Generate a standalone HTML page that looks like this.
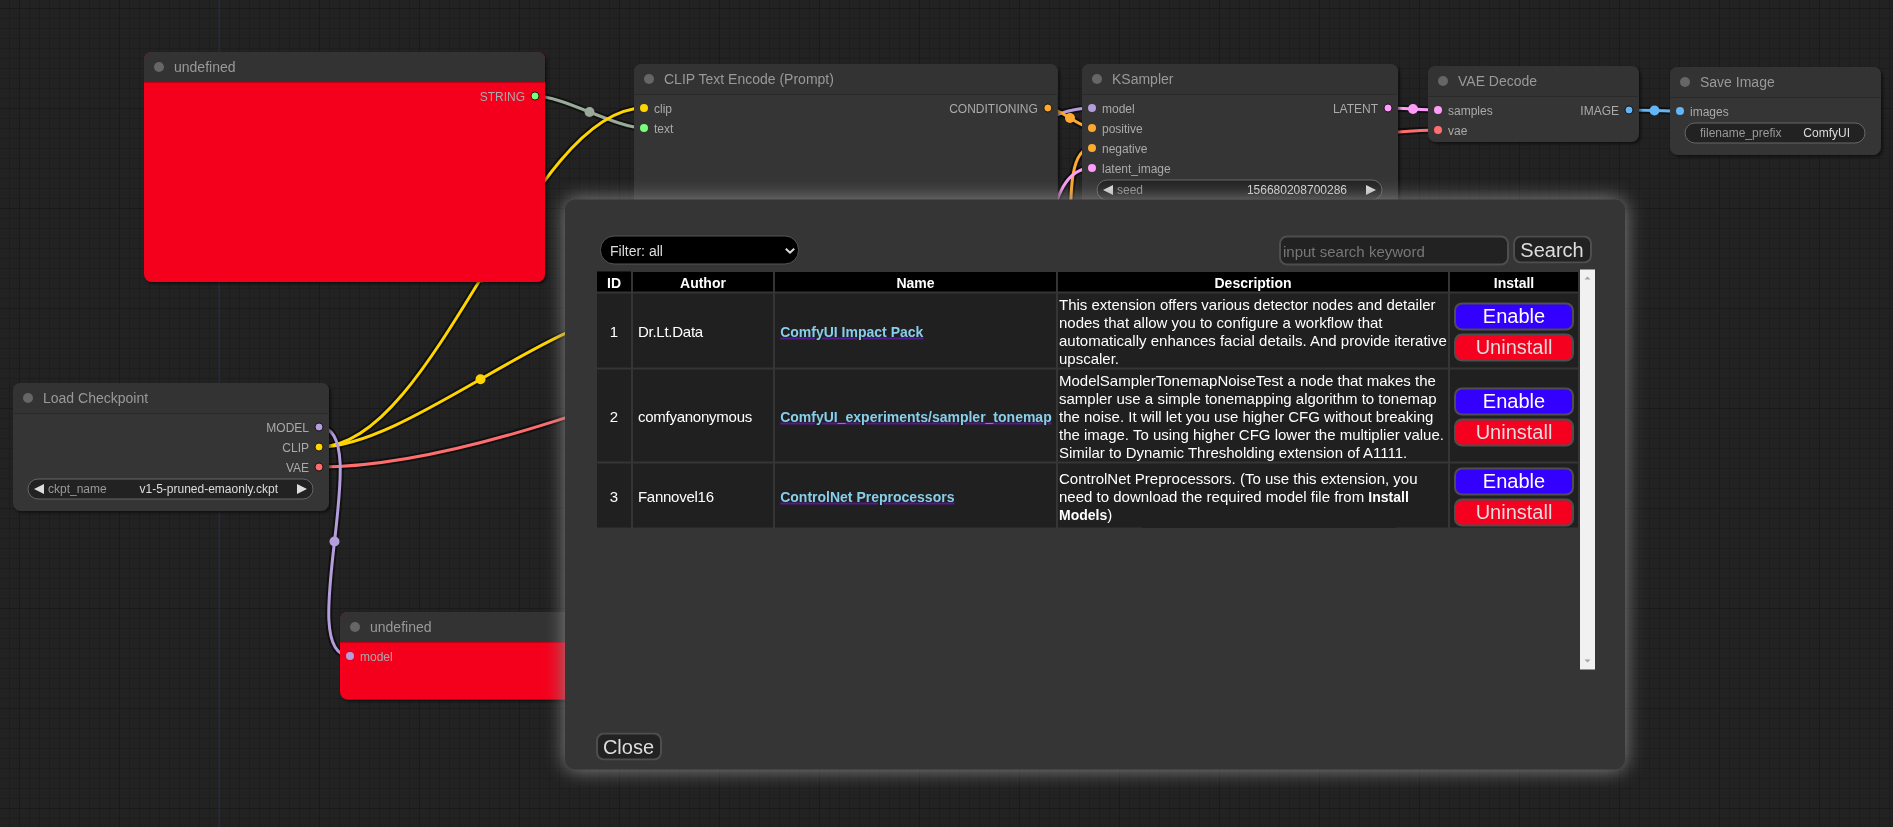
<!DOCTYPE html>
<html><head><meta charset="utf-8"><style>
*{box-sizing:border-box}
html,body{margin:0;padding:0;width:1893px;height:827px;overflow:hidden;font-family:"Liberation Sans", sans-serif}
body{background-color:#222;background-image:linear-gradient(to right,#1a1a1a 1px,transparent 1px),linear-gradient(to bottom,#1a1a1a 1px,transparent 1px),linear-gradient(to right,#1d1d1d 1px,transparent 1px),linear-gradient(to bottom,#1d1d1d 1px,transparent 1px);
background-size:100px 100%,100% 100px,10px 100%,100% 10px;background-position:19px 0,0 8px,9px 0,0 8px}
#cv{position:absolute;left:0;top:0;will-change:transform}
#cv text{font-family:"Liberation Sans", sans-serif}
.dlg{position:absolute;left:565px;top:199px;width:1060px;height:570px;background:#353535;border-radius:10px;box-shadow:0 0 20px #888;}
.sel{position:absolute;left:600px;top:235px;width:199px;height:29px;background:#000;border:1px solid #555;border-radius:14px;color:#ddd;font-size:14px;padding-left:9px;line-height:29px}
.sel svg{position:absolute;right:2px;top:9.5px}
.inp{position:absolute;left:1279px;top:235px;width:229.5px;height:30px;background:#222;border:2px solid #4e4e4e;border-radius:8px;color:#777;font-size:15px;line-height:27px;padding-left:2px}
.btn{position:absolute;background:#222;border:2px solid #4e4e4e;border-radius:8px;color:#ddd;font-size:20px;text-align:center;line-height:24px}
.tbl{position:absolute;left:595px;top:269px;width:985px;height:400px}
.cell{position:absolute;background:#202020;color:#fff;font-size:15px}
.hd{position:absolute;background:#000;color:#fff;font-weight:bold;font-size:14px;text-align:center;line-height:19px;padding-top:2px}
.desc{line-height:18px;padding:2px 0 0 1px}
.desc b{font-size:14px}
.mid{display:flex;align-items:center;padding-top:1px}
.mid2{padding-top:2px}
a.lk{color:#551A8B;text-decoration:underline;text-decoration-thickness:1.5px;font-weight:bold;font-size:14px}
a.lk span{color:#87CEEB}
.sb{position:absolute;left:1580px;top:269px;width:15px;height:400px;background:#f1f1f1}
.ib{position:absolute;width:120px;height:28px;border:2px solid #4e4e4e;border-radius:8px;font-size:20px;text-align:center;line-height:23px}
</style></head><body>
<svg id="cv" width="1893" height="827" viewBox="0 0 1893 827">
<defs>
<pattern id="gmin" x="9.5" y="8.2" width="10" height="10" patternUnits="userSpaceOnUse">
<rect x="0" y="0" width="10" height="1.5" fill="#1c1c1c"/><rect x="-0.6" y="0" width="1.5" height="10" fill="#1c1c1c"/>
</pattern>
<pattern id="gmaj" x="19" y="8" width="100" height="100" patternUnits="userSpaceOnUse">
<rect x="0" y="-0.3" width="100" height="2" fill="#1a1a1a"/><rect x="-0.5" y="0" width="2" height="100" fill="#1a1a1a"/>
</pattern>
<filter id="tsh" x="-5%" y="-20%" width="110%" height="160%"><feDropShadow dx="2" dy="2" stdDeviation="1.5" flood-color="#000" flood-opacity="0.5"/></filter>
<filter id="nsh" x="-5%" y="-5%" width="110%" height="120%"><feDropShadow dx="2" dy="2" stdDeviation="1.5" flood-color="#000" flood-opacity="0.5"/></filter>
</defs>
<rect x="218.5" y="0" width="1.5" height="827" fill="#232b40"/>

<path d="M535.00,96.00 C563.40,96.00 615.60,128.00 644.00,128.00" fill="none" stroke="rgba(0,0,0,0.5)" stroke-width="7" stroke-linecap="round"/>
<path d="M319.00,447.00 C436.41,447.00 526.59,108.00 644.00,108.00" fill="none" stroke="rgba(0,0,0,0.5)" stroke-width="7" stroke-linecap="round"/>
<path d="M319.00,447.00 C406.57,447.00 554.43,311.50 642.00,311.50" fill="none" stroke="rgba(0,0,0,0.5)" stroke-width="7" stroke-linecap="round"/>
<path d="M319.00,467.00 C611.16,467.00 1145.84,130.00 1438.00,130.00" fill="none" stroke="rgba(0,0,0,0.5)" stroke-width="7" stroke-linecap="round"/>
<path d="M610.00,656.00 C792.45,656.00 909.55,108.00 1092.00,108.00" fill="none" stroke="rgba(0,0,0,0.5)" stroke-width="7" stroke-linecap="round"/>
<path d="M319.00,427.00 C376.77,427.00 292.23,656.00 350.00,656.00" fill="none" stroke="rgba(0,0,0,0.5)" stroke-width="7" stroke-linecap="round"/>
<path d="M1048.00,108.00 C1060.08,108.00 1079.92,128.00 1092.00,128.00" fill="none" stroke="rgba(0,0,0,0.5)" stroke-width="7" stroke-linecap="round"/>
<path d="M1048.30,311.50 C1090.61,311.50 1049.69,148.00 1092.00,148.00" fill="none" stroke="rgba(0,0,0,0.5)" stroke-width="7" stroke-linecap="round"/>
<path d="M998.00,531.50 C1091.86,531.50 998.14,168.00 1092.00,168.00" fill="none" stroke="rgba(0,0,0,0.5)" stroke-width="7" stroke-linecap="round"/>
<path d="M1388.00,108.00 C1400.51,108.00 1425.49,110.00 1438.00,110.00" fill="none" stroke="rgba(0,0,0,0.5)" stroke-width="7" stroke-linecap="round"/>
<path d="M1629.00,110.00 C1641.75,110.00 1667.25,111.00 1680.00,111.00" fill="none" stroke="rgba(0,0,0,0.5)" stroke-width="7" stroke-linecap="round"/>
<path d="M535.00,96.00 C563.40,96.00 615.60,128.00 644.00,128.00" fill="none" stroke="#9A9" stroke-width="3"/>
<circle cx="589.50" cy="112.00" r="5" fill="#9A9"/>
<path d="M319.00,447.00 C436.41,447.00 526.59,108.00 644.00,108.00" fill="none" stroke="#FFD500" stroke-width="3"/>
<circle cx="481.50" cy="277.50" r="5" fill="#FFD500"/>
<path d="M319.00,447.00 C406.57,447.00 554.43,311.50 642.00,311.50" fill="none" stroke="#FFD500" stroke-width="3"/>
<circle cx="480.50" cy="379.25" r="5" fill="#FFD500"/>
<path d="M319.00,467.00 C611.16,467.00 1145.84,130.00 1438.00,130.00" fill="none" stroke="#FF6E6E" stroke-width="3"/>
<circle cx="878.50" cy="298.50" r="5" fill="#FF6E6E"/>
<path d="M610.00,656.00 C792.45,656.00 909.55,108.00 1092.00,108.00" fill="none" stroke="#B39DDB" stroke-width="3"/>
<circle cx="851.00" cy="382.00" r="5" fill="#B39DDB"/>
<path d="M319.00,427.00 C376.77,427.00 292.23,656.00 350.00,656.00" fill="none" stroke="#B39DDB" stroke-width="3"/>
<circle cx="334.50" cy="541.50" r="5" fill="#B39DDB"/>
<path d="M1048.00,108.00 C1060.08,108.00 1079.92,128.00 1092.00,128.00" fill="none" stroke="#FFA931" stroke-width="3"/>
<circle cx="1070.00" cy="118.00" r="5" fill="#FFA931"/>
<path d="M1048.30,311.50 C1090.61,311.50 1049.69,148.00 1092.00,148.00" fill="none" stroke="#FFA931" stroke-width="3"/>
<circle cx="1070.15" cy="229.75" r="5" fill="#FFA931"/>
<path d="M998.00,531.50 C1091.86,531.50 998.14,168.00 1092.00,168.00" fill="none" stroke="#FF9CF9" stroke-width="3"/>
<circle cx="1045.00" cy="349.75" r="5" fill="#FF9CF9"/>
<path d="M1388.00,108.00 C1400.51,108.00 1425.49,110.00 1438.00,110.00" fill="none" stroke="#FF9CF9" stroke-width="3"/>
<circle cx="1413.00" cy="109.00" r="5" fill="#FF9CF9"/>
<path d="M1629.00,110.00 C1641.75,110.00 1667.25,111.00 1680.00,111.00" fill="none" stroke="#64B5F6" stroke-width="3"/>
<circle cx="1654.50" cy="110.50" r="5" fill="#64B5F6"/>
<rect x="144" y="52" width="401" height="230" rx="8" fill="#F5001E" filter="url(#nsh)"/>
<path d="M144,82 L144,60 Q144,52 152,52 L537,52 Q545,52 545,60 L545,82 Z" fill="#333"/>
<rect x="144" y="82" width="400" height="1" fill="#000" fill-opacity="0.2"/>
<circle cx="159" cy="67" r="5" fill="#666"/>
<text x="174" y="72" font-size="14" fill="#999" text-anchor="start" font-weight="normal">undefined</text>
<circle cx="535" cy="96.0" r="4" fill="#7F7" stroke="#000" stroke-opacity="0.8" stroke-width="1"/>
<text x="525" y="101.0" font-size="12" fill="#AAA" text-anchor="end" font-weight="normal">STRING</text>
<rect x="634" y="64" width="423.84" height="194.31" rx="8" fill="#353535" filter="url(#nsh)"/>
<path d="M634,94 L634,72 Q634,64 642,64 L1049.84,64 Q1057.84,64 1057.84,72 L1057.84,94 Z" fill="#333"/>
<rect x="634" y="94" width="422.84" height="1" fill="#000" fill-opacity="0.2"/>
<circle cx="649" cy="79" r="5" fill="#666"/>
<text x="664" y="84" font-size="14" fill="#999" text-anchor="start" font-weight="normal">CLIP Text Encode (Prompt)</text>
<circle cx="644" cy="108.0" r="4" fill="#FFD500"/>
<text x="654" y="113.0" font-size="12" fill="#AAA" text-anchor="start" font-weight="normal">clip</text>
<circle cx="644" cy="128.0" r="4" fill="#7F7"/>
<text x="654" y="133.0" font-size="12" fill="#AAA" text-anchor="start" font-weight="normal">text</text>
<circle cx="1047.84" cy="108.0" r="4" fill="#FFA931" stroke="#000" stroke-opacity="0.8" stroke-width="1"/>
<text x="1037.84" y="113.0" font-size="12" fill="#AAA" text-anchor="end" font-weight="normal">CONDITIONING</text>
<rect x="1082" y="64" width="316" height="292" rx="8" fill="#353535" filter="url(#nsh)"/>
<path d="M1082,94 L1082,72 Q1082,64 1090,64 L1390,64 Q1398,64 1398,72 L1398,94 Z" fill="#333"/>
<rect x="1082" y="94" width="315" height="1" fill="#000" fill-opacity="0.2"/>
<circle cx="1097" cy="79" r="5" fill="#666"/>
<text x="1112" y="84" font-size="14" fill="#999" text-anchor="start" font-weight="normal">KSampler</text>
<circle cx="1092" cy="108.0" r="4" fill="#B39DDB"/>
<text x="1102" y="113.0" font-size="12" fill="#AAA" text-anchor="start" font-weight="normal">model</text>
<circle cx="1092" cy="128.0" r="4" fill="#FFA931"/>
<text x="1102" y="133.0" font-size="12" fill="#AAA" text-anchor="start" font-weight="normal">positive</text>
<circle cx="1092" cy="148.0" r="4" fill="#FFA931"/>
<text x="1102" y="153.0" font-size="12" fill="#AAA" text-anchor="start" font-weight="normal">negative</text>
<circle cx="1092" cy="168.0" r="4" fill="#FF9CF9"/>
<text x="1102" y="173.0" font-size="12" fill="#AAA" text-anchor="start" font-weight="normal">latent_image</text>
<circle cx="1388" cy="108.0" r="4" fill="#FF9CF9" stroke="#000" stroke-opacity="0.8" stroke-width="1"/>
<text x="1378" y="113.0" font-size="12" fill="#AAA" text-anchor="end" font-weight="normal">LATENT</text>
<rect x="1097" y="180" width="285" height="20" rx="10" fill="#222" stroke="#666" stroke-width="1"/>
<path d="M1113,185 L1103,190 L1113,195 Z" fill="#DDD"/>
<path d="M1366,185 L1376,190 L1366,195 Z" fill="#DDD"/>
<text x="1117" y="194" font-size="12" fill="#999" text-anchor="start" font-weight="normal">seed</text>
<text x="1347" y="194" font-size="12" fill="#DDD" text-anchor="end" font-weight="normal">156680208700286</text>
<rect x="1428" y="66" width="211" height="76" rx="8" fill="#353535" filter="url(#nsh)"/>
<path d="M1428,96 L1428,74 Q1428,66 1436,66 L1631,66 Q1639,66 1639,74 L1639,96 Z" fill="#333"/>
<rect x="1428" y="96" width="210" height="1" fill="#000" fill-opacity="0.2"/>
<circle cx="1443" cy="81" r="5" fill="#666"/>
<text x="1458" y="86" font-size="14" fill="#999" text-anchor="start" font-weight="normal">VAE Decode</text>
<circle cx="1438" cy="110.0" r="4" fill="#FF9CF9"/>
<text x="1448" y="115.0" font-size="12" fill="#AAA" text-anchor="start" font-weight="normal">samples</text>
<circle cx="1438" cy="130.0" r="4" fill="#FF6E6E"/>
<text x="1448" y="135.0" font-size="12" fill="#AAA" text-anchor="start" font-weight="normal">vae</text>
<circle cx="1629" cy="110.0" r="4" fill="#64B5F6" stroke="#000" stroke-opacity="0.8" stroke-width="1"/>
<text x="1619" y="115.0" font-size="12" fill="#AAA" text-anchor="end" font-weight="normal">IMAGE</text>
<rect x="1670" y="67" width="211" height="88" rx="8" fill="#353535" filter="url(#nsh)"/>
<path d="M1670,97 L1670,75 Q1670,67 1678,67 L1873,67 Q1881,67 1881,75 L1881,97 Z" fill="#333"/>
<rect x="1670" y="97" width="210" height="1" fill="#000" fill-opacity="0.2"/>
<circle cx="1685" cy="82" r="5" fill="#666"/>
<text x="1700" y="87" font-size="14" fill="#999" text-anchor="start" font-weight="normal">Save Image</text>
<circle cx="1680" cy="111.0" r="4" fill="#64B5F6"/>
<text x="1690" y="116.0" font-size="12" fill="#AAA" text-anchor="start" font-weight="normal">images</text>
<rect x="1685" y="123" width="180" height="20" rx="10" fill="#222" stroke="#666" stroke-width="1"/>
<text x="1700" y="137" font-size="12" fill="#999" text-anchor="start" font-weight="normal">filename_prefix</text>
<text x="1850" y="137" font-size="12" fill="#DDD" text-anchor="end" font-weight="normal">ComfyUI</text>
<rect x="13" y="383" width="316" height="128" rx="8" fill="#353535" filter="url(#nsh)"/>
<path d="M13,413 L13,391 Q13,383 21,383 L321,383 Q329,383 329,391 L329,413 Z" fill="#333"/>
<rect x="13" y="413" width="315" height="1" fill="#000" fill-opacity="0.2"/>
<circle cx="28" cy="398" r="5" fill="#666"/>
<text x="43" y="403" font-size="14" fill="#999" text-anchor="start" font-weight="normal">Load Checkpoint</text>
<circle cx="319" cy="427.0" r="4" fill="#B39DDB" stroke="#000" stroke-opacity="0.8" stroke-width="1"/>
<text x="309" y="432.0" font-size="12" fill="#AAA" text-anchor="end" font-weight="normal">MODEL</text>
<circle cx="319" cy="447.0" r="4" fill="#FFD500" stroke="#000" stroke-opacity="0.8" stroke-width="1"/>
<text x="309" y="452.0" font-size="12" fill="#AAA" text-anchor="end" font-weight="normal">CLIP</text>
<circle cx="319" cy="467.0" r="4" fill="#FF6E6E" stroke="#000" stroke-opacity="0.8" stroke-width="1"/>
<text x="309" y="472.0" font-size="12" fill="#AAA" text-anchor="end" font-weight="normal">VAE</text>
<rect x="28" y="479" width="285" height="20" rx="10" fill="#222" stroke="#666" stroke-width="1"/>
<path d="M44,484 L34,489 L44,494 Z" fill="#DDD"/>
<path d="M297,484 L307,489 L297,494 Z" fill="#DDD"/>
<text x="48" y="493" font-size="12" fill="#999" text-anchor="start" font-weight="normal">ckpt_name</text>
<text x="278" y="493" font-size="12" fill="#DDD" text-anchor="end" font-weight="normal">v1-5-pruned-emaonly.ckpt</text>
<rect x="340" y="612" width="401" height="87.5" rx="8" fill="#F5001E" filter="url(#nsh)"/>
<path d="M340,642 L340,620 Q340,612 348,612 L733,612 Q741,612 741,620 L741,642 Z" fill="#333"/>
<rect x="340" y="642" width="400" height="1" fill="#000" fill-opacity="0.2"/>
<circle cx="355" cy="627" r="5" fill="#666"/>
<text x="370" y="632" font-size="14" fill="#999" text-anchor="start" font-weight="normal">undefined</text>
<circle cx="350" cy="656.0" r="4" fill="#B39DDB"/>
<text x="360" y="661.0" font-size="12" fill="#AAA" text-anchor="start" font-weight="normal">model</text>
</svg>
<div style="position:absolute;left:0;top:0;width:1px;height:1px;will-change:transform;transform:translateY(0.5px)">
<div class="dlg"></div>
<div class="sel">Filter: all<svg width="12" height="9" viewBox="0 0 12 9"><path d="M1.8,2.2 L6,6.2 L10.2,2.2" fill="none" stroke="#ddd" stroke-width="2"/></svg></div>
<div class="inp">input search keyword</div>
<div class="btn" style="left:1512.5px;top:235px;width:79px;height:28px">Search</div>
<div class="btn" style="left:595.5px;top:732px;width:66px;height:28px">Close</div>
<div class="hd" style="left:597px;top:271px;width:34px;height:20px">ID</div>
<div class="hd" style="left:633px;top:271px;width:140px;height:20px">Author</div>
<div class="hd" style="left:775px;top:271px;width:281px;height:20px">Name</div>
<div class="hd" style="left:1058px;top:271px;width:390px;height:20px">Description</div>
<div class="hd" style="left:1450px;top:271px;width:128px;height:20px">Install</div>
<div class="cell mid" style="left:597px;top:293px;width:34px;height:74px;justify-content:center">1</div>
<div class="cell mid" style="left:633px;top:293px;width:140px;height:74px;padding-left:1px;white-space:pre;letter-spacing:-0.25px">&nbsp;Dr.Lt.Data</div>
<div class="cell mid mid2" style="left:775px;top:293px;width:281px;height:74px;padding-left:1px;white-space:pre">&nbsp;<a class="lk"><span>ComfyUI Impact Pack</span></a></div>
<div class="cell desc" style="left:1058px;top:293px;width:390px;height:74px;padding-top:2px">This extension offers various detector nodes and detailer nodes that allow you to configure a workflow that automatically enhances facial details. And provide iterative upscaler.</div>
<div class="cell" style="left:1450px;top:293px;width:128px;height:74px"></div>
<div class="ib" style="left:1454px;top:302px;background:#3300FF;color:#fff">Enable</div>
<div class="ib" style="left:1454px;top:333px;background:#F5001E;color:#ddd">Uninstall</div>
<div class="cell mid" style="left:597px;top:369px;width:34px;height:92px;justify-content:center">2</div>
<div class="cell mid" style="left:633px;top:369px;width:140px;height:92px;padding-left:1px;white-space:pre;letter-spacing:-0.25px">&nbsp;comfyanonymous</div>
<div class="cell mid mid2" style="left:775px;top:369px;width:281px;height:92px;padding-left:1px;white-space:pre">&nbsp;<a class="lk"><span>ComfyUI_experiments/sampler_tonemap</span></a></div>
<div class="cell desc" style="left:1058px;top:369px;width:390px;height:92px;padding-top:2px">ModelSamplerTonemapNoiseTest a node that makes the sampler use a simple tonemapping algorithm to tonemap the noise. It will let you use higher CFG without breaking the image. To using higher CFG lower the multiplier value. Similar to Dynamic Thresholding extension of A1111.</div>
<div class="cell" style="left:1450px;top:369px;width:128px;height:92px"></div>
<div class="ib" style="left:1454px;top:387px;background:#3300FF;color:#fff">Enable</div>
<div class="ib" style="left:1454px;top:418px;background:#F5001E;color:#ddd">Uninstall</div>
<div class="cell mid" style="left:597px;top:463px;width:34px;height:64px;justify-content:center">3</div>
<div class="cell mid" style="left:633px;top:463px;width:140px;height:64px;padding-left:1px;white-space:pre;letter-spacing:-0.25px">&nbsp;Fannovel16</div>
<div class="cell mid mid2" style="left:775px;top:463px;width:281px;height:64px;padding-left:1px;white-space:pre">&nbsp;<a class="lk"><span>ControlNet Preprocessors</span></a></div>
<div class="cell desc" style="left:1058px;top:463px;width:390px;height:64px;padding-top:6px">ControlNet Preprocessors. (To use this extension, you need to download the required model file from <b>Install Models</b>)</div>
<div class="cell" style="left:1450px;top:463px;width:128px;height:64px"></div>
<div class="ib" style="left:1454px;top:467px;background:#3300FF;color:#fff">Enable</div>
<div class="ib" style="left:1454px;top:498px;background:#F5001E;color:#ddd">Uninstall</div>
<div class="sb"></div>
<svg style="position:absolute;left:1580px;top:269px" width="15" height="400"><path d="M4.5,10 L7.5,7 L10.5,10 Z" fill="#a3a3a3"/><path d="M4.5,390 L7.5,393 L10.5,390 Z" fill="#a3a3a3"/></svg>
</div>
</body></html>
